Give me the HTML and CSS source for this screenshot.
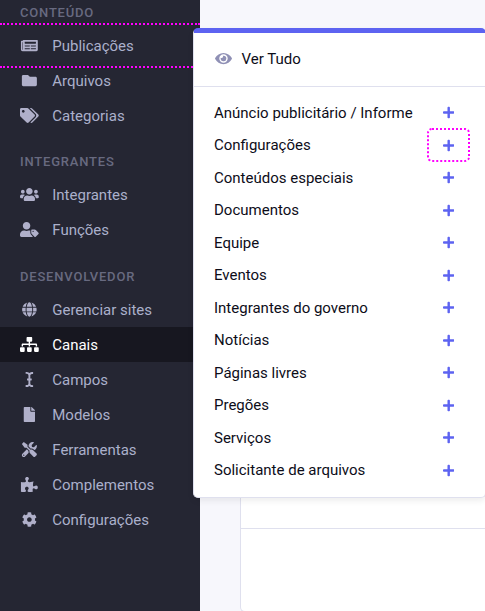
FILE: index.html
```html
<!DOCTYPE html>
<html lang="pt-BR">
<head>
<meta charset="utf-8">
<title>Canais</title>
<link rel="stylesheet" href="styles.css">
</head>
<body>
<svg class="defs" width="0" height="0"><symbol id="plus" viewBox="0 0 448 512"><path d="M416 208H272V64c0-17.670-14.330-32-32-32h-32c-17.670 0-32 14.330-32 32v144H32c-17.670 0-32 14.330-32 32v32c0 17.670 14.330 32 32 32h144v144c0 17.670 14.330 32 32 32h32c17.670 0 32-14.330 32-32V304h144c17.670 0 32-14.330 32-32v-32c0-17.670-14.330-32-32-32z"/></symbol></svg>
<div class="app">
  <nav class="sidebar">
    <h2 class="heading">Conteúdo</h2>
    <a class="item item-marked"><svg class="icon" viewBox="-32 0 640 512"><path d="M552 64H88c-13 0-24 11-24 24v8H24c-13 0-24 11-24 24v272c0 31 25 56 56 56h472c26.500 0 48-21.500 48-48V88c0-13-11-24-24-24zM56 400a8 8 0 0 1-8-8V144h16v248a8 8 0 0 1-8 8zm236-16H140c-7 0-12-5-12-12v-8c0-7 5-12 12-12h152c7 0 12 5 12 12v8c0 7-5 12-12 12zm208 0H348c-7 0-12-5-12-12v-8c0-7 5-12 12-12h152c7 0 12 5 12 12v8c0 7-5 12-12 12zm-208-96H140c-7 0-12-5-12-12v-8c0-7 5-12 12-12h152c7 0 12 5 12 12v8c0 7-5 12-12 12zm208 0H348c-7 0-12-5-12-12v-8c0-7 5-12 12-12h152c7 0 12 5 12 12v8c0 7-5 12-12 12zm0-96H140c-7 0-12-5-12-12v-40c0-7 5-12 12-12h360c7 0 12 5 12 12v40c0 7-5 12-12 12z"/></svg>Publicações</a>
    <a class="item"><svg class="icon" viewBox="-64 0 640 512"><path d="M464 128H272l-64-64H48C21.500 64 0 85.500 0 112v288c0 26.500 21.500 48 48 48h416c26.500 0 48-21.500 48-48V176c0-26.500-21.500-48-48-48z"/></svg>Arquivos</a>
    <a class="item"><svg class="icon" viewBox="0 0 640 512"><path d="M497.941 225.941L286.059 14.059A48 48 0 0 0 252.118 0H48C21.490 0 0 21.490 0 48v204.118a48 48 0 0 0 14.059 33.941l211.882 211.882c18.744 18.745 49.136 18.746 67.882 0l204.118-204.118c18.745-18.745 18.745-49.137 0-67.882zM112 160c-26.510 0-48-21.490-48-48s21.490-48 48-48 48 21.490 48 48-21.490 48-48 48zm513.941 133.823L421.823 497.941c-18.745 18.745-49.137 18.745-67.882 0l-.360-.360L527.640 323.522c16.999-16.999 26.360-39.600 26.360-63.640s-9.362-46.641-26.360-63.640L331.397 0h48.721a48 48 0 0 1 33.941 14.059l211.882 211.882c18.745 18.745 18.745 49.137 0 67.882z"/></svg>Categorias</a>

    <h2 class="heading">Integrantes</h2>
    <a class="item"><svg class="icon" viewBox="0 0 640 512"><path d="M96 224c35.300 0 64-28.700 64-64s-28.700-64-64-64-64 28.700-64 64 28.700 64 64 64zm448 0c35.300 0 64-28.700 64-64s-28.700-64-64-64-64 28.700-64 64 28.700 64 64 64zm32 32h-64c-17.600 0-33.500 7.100-45.100 18.600 40.300 22.100 68.900 62 75.100 109.400h66c17.700 0 32-14.300 32-32v-32c0-35.300-28.700-64-64-64zm-256 0c61.900 0 112-50.100 112-112S381.900 32 320 32 208 82.100 208 144s50.100 112 112 112zm76.800 32h-8.300c-20.800 10-43.900 16-68.500 16s-47.600-6-68.500-16h-8.300C179.600 288 128 339.600 128 403.200V432c0 26.500 21.500 48 48 48h288c26.500 0 48-21.500 48-48v-28.800c0-63.600-51.600-115.200-115.200-115.200zm-223.700-13.400C161.500 263.100 145.600 256 128 256H64c-35.300 0-64 28.700-64 64v32c0 17.700 14.300 32 32 32h65.900c6.300-47.400 34.900-87.300 75.200-109.400z"/></svg>Integrantes</a>
    <a class="item"><svg class="icon" viewBox="0 0 640 512"><path d="M630.600 364.900l-90.300-90.200c-12-12-28.300-18.700-45.300-18.700h-79.300c-17.700 0-32 14.300-32 32v79.200c0 17 6.700 33.200 18.700 45.200l90.300 90.200c12.500 12.500 32.800 12.500 45.300 0l92.500-92.500c12.600-12.500 12.600-32.700.100-45.200zm-182.800-21c-13.300 0-24-10.700-24-24s10.700-24 24-24 24 10.700 24 24c0 13.200-10.700 24-24 24zm-223.800-88c70.700 0 128-57.300 128-128C352 57.300 294.700 0 224 0S96 57.300 96 128c0 70.600 57.300 127.900 128 127.900zm127.800 111.200V294c-12.200-3.600-24.900-6.200-38.200-6.200h-16.700c-22.200 10.200-46.900 16-72.900 16s-50.600-5.800-72.900-16h-16.700C60.200 287.900 0 348.100 0 422.300v41.600c0 26.500 21.500 48 48 48h352c15.500 0 29.100-7.500 37.900-18.900l-58-58c-18.100-18.100-28.100-42.200-28.100-67.900z"/></svg>Funções</a>

    <h2 class="heading heading-last">Desenvolvedor</h2>
    <a class="item"><svg class="icon" viewBox="-72 0 640 512"><path d="M336.500 160C322 70.700 287.800 8 248 8s-74 62.700-88.500 152h177zM152 256c0 22.200 1.200 43.500 3.300 64h185.300c2.100-20.500 3.300-41.800 3.300-64s-1.200-43.500-3.300-64H155.300c-2.100 20.500-3.300 41.800-3.300 64zm324.700-96c-28.600-67.900-86.500-120.400-158-141.600 24.400 33.800 41.200 84.700 50 141.600h108zM177.200 18.400C105.800 39.600 47.800 92.100 19.300 160h108c8.700-56.900 25.500-107.800 49.900-141.600zM487.400 192H372.700c2.100 21 3.300 42.500 3.300 64s-1.200 43-3.300 64h114.600c5.500-20.500 8.600-41.800 8.600-64s-3.100-43.500-8.500-64zM120 256c0-21.500 1.200-43 3.300-64H8.600C3.200 212.500 0 233.800 0 256s3.200 43.500 8.600 64h114.600c-2-21-3.200-42.500-3.200-64zm39.500 96c14.500 89.300 48.700 152 88.500 152s74-62.700 88.500-152h-177zm159.300 141.600c71.400-21.200 129.400-73.700 158-141.600h-108c-8.800 56.900-25.600 107.800-50 141.600zM19.300 352c28.600 67.900 86.500 120.400 158 141.600-24.400-33.800-41.200-84.700-50-141.600h-108z"/></svg>Gerenciar sites</a>
    <a class="item item-active"><svg class="icon" viewBox="0 0 640 512"><path d="M128 352H32c-17.670 0-32 14.330-32 32v96c0 17.670 14.330 32 32 32h96c17.670 0 32-14.330 32-32v-96c0-17.670-14.330-32-32-32zm-24-80h192v48h48v-48h192v48h48v-57.590c0-21.170-17.230-38.410-38.410-38.410H344v-64h40c17.670 0 32-14.330 32-32V32c0-17.670-14.330-32-32-32H256c-17.670 0-32 14.330-32 32v96c0 17.670 14.330 32 32 32h40v64H94.410C73.230 224 56 241.230 56 262.410V320h48v-48zm264 80h-96c-17.670 0-32 14.330-32 32v96c0 17.670 14.330 32 32 32h96c17.670 0 32-14.330 32-32v-96c0-17.670-14.330-32-32-32zm240 0h-96c-17.670 0-32 14.330-32 32v96c0 17.670 14.330 32 32 32h96c17.670 0 32-14.330 32-32v-96c0-17.670-14.330-32-32-32z"/></svg>Canais</a>
    <a class="item"><svg class="icon" viewBox="-192 0 640 512"><path d="M256 52.048V12.065C256 5.496 250.726.148 244.158.066 211.621-.344 166.469.011 128 37.959 90.266.736 46.979-.114 11.913.114 5.318.157 0 5.519 0 12.114v39.645c0 6.687 5.458 12.078 12.145 11.998C38.111 63.447 96 67.243 96 112.182V224H60c-6.627 0-12 5.373-12 12v40c0 6.627 5.373 12 12 12h36v112c0 44.932-56.075 48.031-83.950 47.959C5.404 447.942 0 453.306 0 459.952v39.983c0 6.569 5.274 11.917 11.842 11.999 32.537.409 77.689.054 116.158-37.894 37.734 37.223 81.021 38.073 116.087 37.845 6.595-.043 11.913-5.405 11.913-12V460.240c0-6.687-5.458-12.078-12.145-11.998C217.889 448.553 160 444.939 160 400V288h36c6.627 0 12-5.373 12-12v-40c0-6.627-5.373-12-12-12h-36V112.182c0-44.932 56.075-48.213 83.950-48.142 6.646.018 12.050-5.346 12.050-11.992z"/></svg>Campos</a>
    <a class="item"><svg class="icon" viewBox="-128 0 640 512"><path d="M224 136V0H24C10.700 0 0 10.700 0 24v464c0 13.300 10.700 24 24 24h336c13.300 0 24-10.700 24-24V160H248c-13.200 0-24-10.800-24-24zm160-14.100v6.100H256V0h6.100c6.400 0 12.500 2.500 17 7l97.900 98c4.500 4.500 7 10.600 7 16.900z"/></svg>Modelos</a>
    <a class="item"><svg class="icon" viewBox="-64 0 640 512"><path d="M501.100 395.700L384 278.600c-23.100-23.100-57.600-27.600-85.400-13.900L192 158.100V96L64 0 0 64l96 128h62.100l106.600 106.600c-13.600 27.800-9.200 62.300 13.900 85.400l117.100 117.100c14.600 14.600 38.200 14.600 52.700 0l52.700-52.700c14.500-14.600 14.500-38.200 0-52.700zM331.700 225c28.300 0 54.900 11 74.900 31l19.400 19.400c15.800-6.900 30.800-16.500 43.800-29.500 37.100-37.100 49.700-89.300 37.900-136.700-2.200-9-13.500-12.100-20.100-5.500l-74.400 74.400-67.900-11.300L334 98.900l74.400-74.400c6.600-6.600 3.400-17.900-5.700-20.200-47.400-11.700-99.600.9-136.600 37.900-28.500 28.500-41.900 66.100-41.200 103.600l82.100 82.100c8.100-1.900 16.500-2.900 24.700-2.900zm-103.900 82l-56.700-56.700L18.700 402.800c-25 25-25 65.500 0 90.500s65.500 25 90.500 0l123.600-123.600c-7.600-19.900-9.900-41.600-5-62.700zM64 472c-13.200 0-24-10.800-24-24 0-13.300 10.700-24 24-24s24 10.700 24 24c0 13.200-10.700 24-24 24z"/></svg>Ferramentas</a>
    <a class="item"><svg class="icon" viewBox="-32 0 640 512"><path d="M519.442 288.651c-41.519 0-59.500 31.593-82.058 31.593C377.409 320.244 432 144 432 144s-196.288 80-196.288-3.297c0-35.827 36.288-46.250 36.288-85.985C272 19.216 243.885 0 210.539 0c-34.654 0-66.366 18.891-66.366 56.346 0 41.364 31.711 59.277 31.711 81.750C175.885 207.719 0 166.758 0 166.758v333.237s178.635 41.047 178.635-28.662c0-22.473-40-40.107-40-81.471 0-37.456 29.250-56.346 63.577-56.346 33.673 0 61.788 19.216 61.788 54.717 0 39.735-36.288 50.158-36.288 85.985 0 60.803 129.675 25.730 181.230 25.730 0 0-34.725-120.101 25.827-120.101 35.962 0 46.423 36.152 86.308 36.152C556.712 416 576 387.990 576 354.443c0-34.199-18.962-65.792-56.558-65.792z"/></svg>Complementos</a>
    <a class="item"><svg class="icon" viewBox="-64 0 640 512"><path d="M487.400 315.700l-42.600-24.600c4.300-23.200 4.300-47 0-70.200l42.600-24.600c4.900-2.800 7.100-8.600 5.500-14-11.100-35.600-30-67.800-54.700-94.600-3.800-4.100-10-5.100-14.800-2.300L380.800 110c-17.900-15.400-38.500-27.300-60.800-35.100V25.800c0-5.600-3.900-10.500-9.400-11.700-36.700-8.200-74.300-7.800-109.200 0-5.500 1.200-9.400 6.100-9.400 11.700V75c-22.200 7.900-42.800 19.800-60.800 35.100L88.700 85.500c-4.900-2.800-11-1.900-14.800 2.300-24.700 26.700-43.600 58.900-54.700 94.600-1.700 5.400.6 11.200 5.500 14L67.300 221c-4.300 23.200-4.300 47 0 70.200l-42.600 24.600c-4.900 2.800-7.100 8.600-5.500 14 11.100 35.600 30 67.800 54.700 94.600 3.800 4.100 10 5.100 14.800 2.300l42.600-24.600c17.900 15.400 38.500 27.300 60.800 35.100v49.200c0 5.600 3.900 10.500 9.400 11.700 36.700 8.200 74.300 7.800 109.200 0 5.500-1.200 9.400-6.100 9.400-11.700v-49.200c22.200-7.900 42.800-19.800 60.800-35.100l42.600 24.600c4.900 2.800 11 1.900 14.800-2.300 24.700-26.700 43.600-58.900 54.700-94.600 1.500-5.500-.7-11.300-5.600-14.100zM256 336c-44.100 0-80-35.900-80-80s35.900-80 80-80 80 35.900 80 80-35.900 80-80 80z"/></svg>Configurações</a>
  </nav>
  <main class="content"><section class="panel"><div class="panel-head"></div></section></main>
</div>

<div class="menu">
  <a class="menu-head"><svg class="eye" viewBox="0 0 576 512"><path d="M572.520 241.400C518.290 135.590 410.930 64 288 64S57.680 135.640 3.480 241.410a32.350 32.350 0 0 0 0 29.190C57.710 376.410 165.070 448 288 448s230.320-71.640 284.520-177.410a32.350 32.350 0 0 0 0-29.190zM288 400a144 144 0 1 1 144-144 143.930 143.930 0 0 1-144 144zm0-240a95.310 95.310 0 0 0-25.310 3.790 47.850 47.850 0 0 1-66.900 66.900A95.780 95.780 0 1 0 288 160z"/></svg>Ver Tudo</a>
  <div class="menu-list">
    <div class="row"><span>Anúncio publicitário / Informe</span><i class="plus"><svg><use href="#plus"/></svg></i></div>
    <div class="row"><span>Configurações</span><i class="plus plus-marked"><svg><use href="#plus"/></svg></i></div>
    <div class="row"><span>Conteúdos especiais</span><i class="plus"><svg><use href="#plus"/></svg></i></div>
    <div class="row"><span>Documentos</span><i class="plus"><svg><use href="#plus"/></svg></i></div>
    <div class="row"><span>Equipe</span><i class="plus"><svg><use href="#plus"/></svg></i></div>
    <div class="row"><span>Eventos</span><i class="plus"><svg><use href="#plus"/></svg></i></div>
    <div class="row"><span>Integrantes do governo</span><i class="plus"><svg><use href="#plus"/></svg></i></div>
    <div class="row"><span>Notícias</span><i class="plus"><svg><use href="#plus"/></svg></i></div>
    <div class="row"><span>Páginas livres</span><i class="plus"><svg><use href="#plus"/></svg></i></div>
    <div class="row"><span>Pregões</span><i class="plus"><svg><use href="#plus"/></svg></i></div>
    <div class="row"><span>Serviços</span><i class="plus"><svg><use href="#plus"/></svg></i></div>
    <div class="row"><span>Solicitante de arquivos</span><i class="plus"><svg><use href="#plus"/></svg></i></div>
  </div>
</div>
</body>
</html>
```
FILE: styles.css
```css
* { box-sizing: border-box; }

body {
  margin: 0;
  overflow: hidden;
  background: #f7f7fc;
  font: 15px/20px Roboto, sans-serif;
  color: #0d0d19;
}

.defs { display: none; }

.app { display: flex; height: 611px; }

.sidebar {
  flex: none;
  width: 200px;
  background: #252633;
  color: #abb0cb;
}

.heading {
  margin: 0;
  height: 44px;
  padding: 19px 20px 0;
  font-size: 13px;
  font-weight: 500;
  line-height: 20px;
  letter-spacing: .8px;
  text-transform: uppercase;
  color: #686a80;
}

.heading:first-child { height: 28px; padding-top: 3px; }
.heading-last { height: 45px; padding-top: 20px; }

.item {
  position: relative;
  display: flex;
  align-items: center;
  height: 35px;
  padding-left: 20px;
}

.item-active { background: #171720; color: #fff; }

.item-marked::after {
  content: "";
  position: absolute;
  top: -5px;
  left: 0;
  width: 200px;
  height: 41px;
  border-top: 2px dotted #f0f;
  border-bottom: 2px dotted #f0f;
}

.icon {
  flex: none;
  width: 18.75px;
  height: 15px;
  margin-right: 13.5px;
  fill: #b0b0ca;
}

.item-active .icon { fill: #fff; }

.content {
  flex: 1;
  padding: 40px 0 0 40px;
}

.panel {
  height: 572px;
  background: #fff;
  border: 1px solid #dfe0ee;
  border-right: 0;
  border-radius: 0 0 0 5px;
}

.panel-head { height: 488px; border-bottom: 1px solid #dfe0ee; }

.menu {
  position: absolute;
  top: 28px;
  left: 193px;
  width: 293px;
  height: 470px;
  background: #fff;
  border: 1px solid #dfe0ee;
  border-top: 5px solid #5d63f1;
  border-radius: 5px;
  box-shadow: 0 3px 6px rgba(0, 0, 0, .07);
}

.menu-head {
  display: flex;
  align-items: center;
  gap: 9.5px;
  height: 54px;
  padding: 0 0 2px 21px;
  border-bottom: 1px solid #dfe0ee;
}

.eye { width: 17px; height: 15px; fill: #8f90b5; }

.menu-list { padding: 9.3px 15px 0 20px; }

.row {
  display: flex;
  align-items: center;
  justify-content: space-between;
  height: 32.5px;
}

.plus {
  flex: none;
  display: flex;
  align-items: center;
  justify-content: center;
  width: 43px;
  height: 34px;
}

.plus svg { width: 11.4px; height: 13px; fill: #5d63f1; }

.plus-marked { border: 2px dotted #f0f; border-radius: 5px; }
```
